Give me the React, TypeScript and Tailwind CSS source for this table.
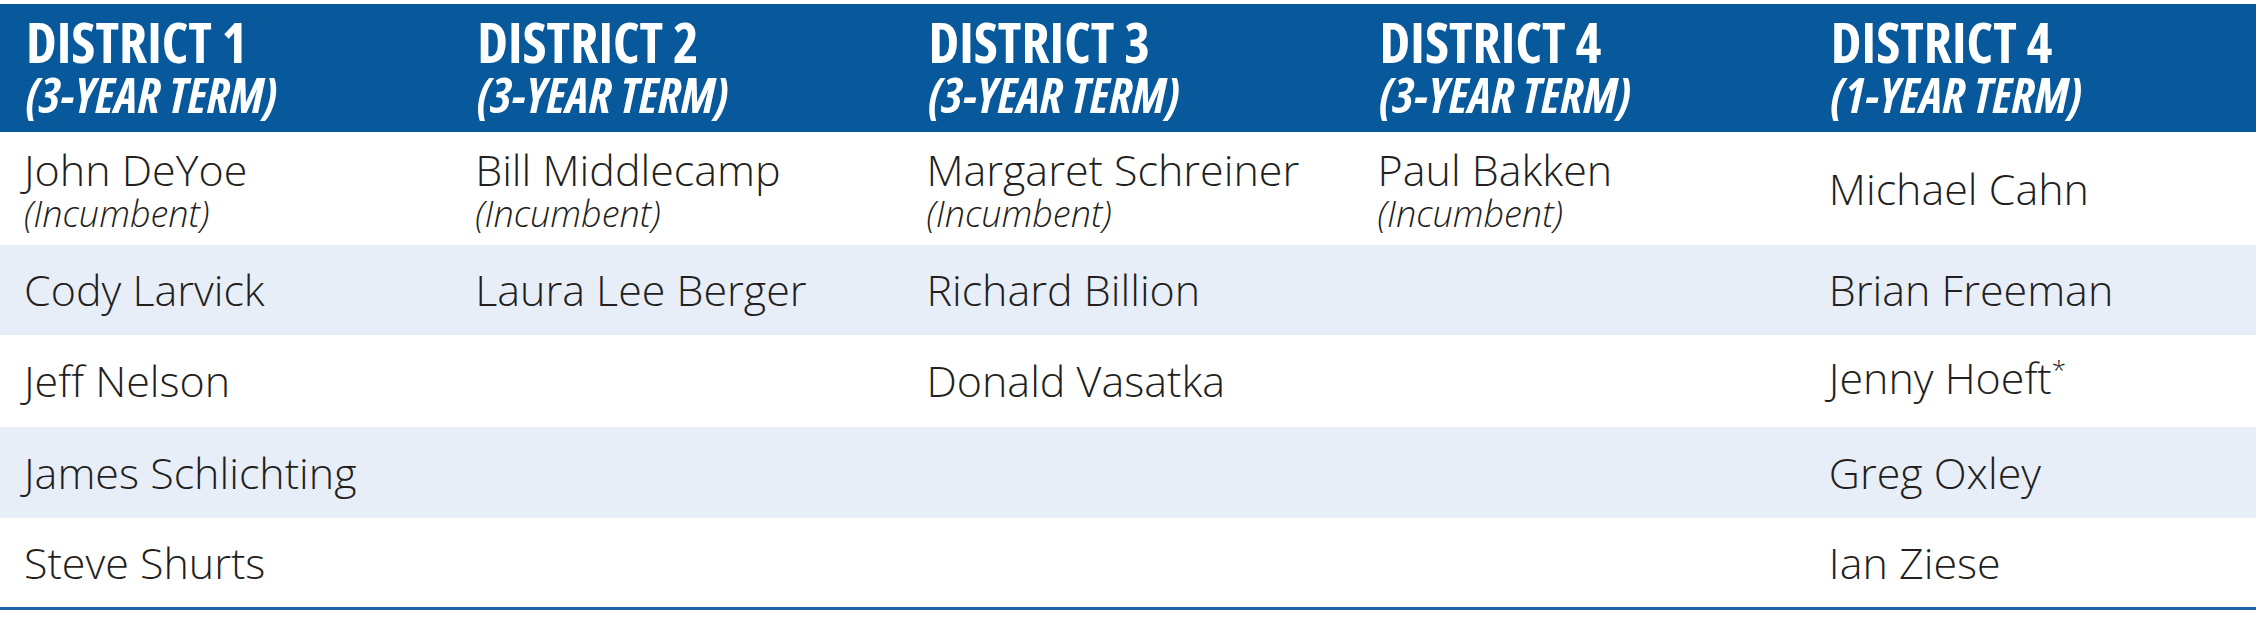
import React from "react";

type Cell = { name: string; incumbent?: boolean; star?: boolean } | null;

const districts = [
  { title: "DISTRICT 1", term: "(3-YEAR TERM)" },
  { title: "DISTRICT 2", term: "(3-YEAR TERM)" },
  { title: "DISTRICT 3", term: "(3-YEAR TERM)" },
  { title: "DISTRICT 4", term: "(3-YEAR TERM)" },
  { title: "DISTRICT 4", term: "(1-YEAR TERM)" },
];

// one array per row, one cell per district
const rows: Cell[][] = [
  [
    { name: "John DeYoe", incumbent: true },
    { name: "Bill Middlecamp", incumbent: true },
    { name: "Margaret Schreiner", incumbent: true },
    { name: "Paul Bakken", incumbent: true },
    { name: "Michael Cahn" },
  ],
  [{ name: "Cody Larvick" }, { name: "Laura Lee Berger" }, { name: "Richard Billion" }, null, { name: "Brian Freeman" }],
  [{ name: "Jeff Nelson" }, null, { name: "Donald Vasatka" }, null, { name: "Jenny Hoeft", star: true }],
  [{ name: "James Schlichting" }, null, null, null, { name: "Greg Oxley" }],
  [{ name: "Steve Shurts" }, null, null, null, { name: "Ian Ziese" }],
];

const rowHeights = ["h-[113px]", "h-[90px]", "h-[92px]", "h-[91px]", "h-[89px]"];

export default function App() {
  return (
    <div className="w-[2256px] h-[626px] bg-white pt-[4px] font-['Open_Sans',sans-serif] text-[#231f20]">
      {/* header */}
      <div className="grid grid-cols-5 h-[128px] bg-[#07599c] text-white">
        {districts.map((d, i) => (
          <div key={i} className="pl-[26px] pt-[8px] font-stretch-condensed">
            <div className="font-bold text-[55px] leading-[60px]">{d.title}</div>
            <div className="font-bold italic text-[49px] leading-[44px]">{d.term}</div>
          </div>
        ))}
      </div>

      {/* candidates */}
      {rows.map((row, r) => (
        <div
          key={r}
          className={`grid grid-cols-5 items-center ${rowHeights[r]} ${r % 2 === 1 ? "bg-[#e8eef8]" : "bg-white"}`}
        >
          {row.map((c, i) => (
            <div key={i} className="pl-[24px]">
              {c && (
                <>
                  <div className="font-light text-[43px] leading-[50px]">
                    {c.name}
                    {c.star && <span className="text-[26px] relative -top-[15px]">*</span>}
                  </div>
                  {c.incumbent && (
                    <div className="font-light italic text-[36px] leading-[38px]">(Incumbent)</div>
                  )}
                </>
              )}
            </div>
          ))}
        </div>
      ))}
      <div className="h-[3px] bg-[#1a64ab]" />
    </div>
  );
}
